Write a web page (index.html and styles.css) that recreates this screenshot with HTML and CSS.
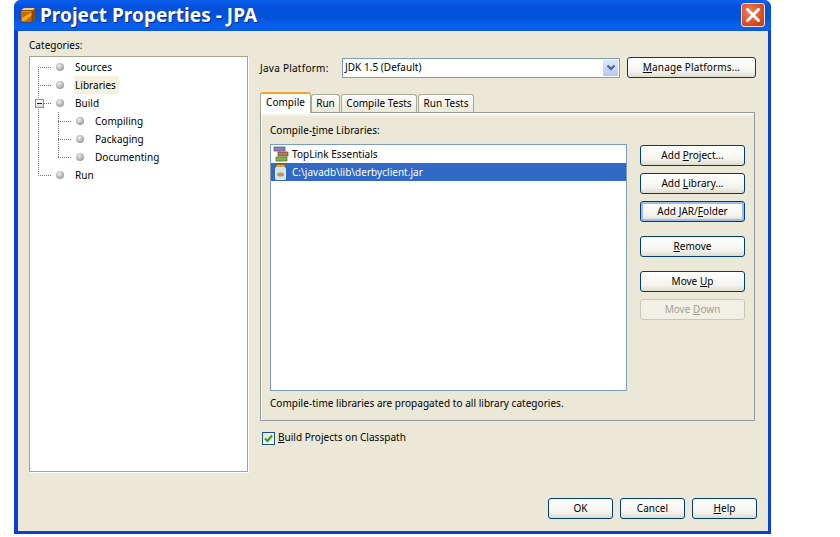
FILE: index.html
```html
<!DOCTYPE html>
<html lang="en">
<head>
<meta charset="utf-8">
<title>Project Properties - JPA</title>
<link rel="stylesheet" href="styles.css">
</head>
<body>
<div class="window">
  <header class="titlebar">
    <svg class="app-icon" width="16" height="16" viewBox="0 0 16 16">
      <path d="M1 3.500 4 1h11v11l-3 3H1z" fill="#e98a10"/>
      <path d="M1 3.500 4 1h11l-3 3H1z" fill="#f6c878"/>
      <path d="M12 4l3-3v11l-3 3z" fill="#8a4a08"/>
      <path d="M2 5h10v9H2z" fill="#c96a05"/>
      <path d="M2 11 12 5v3L5 14H2z" fill="#f3a720"/>
      <path d="M1 3.500h11V15H1z" fill="none" stroke="#6b3a0a" stroke-width=".8"/>
    </svg>
    <h1 class="title">Project Properties - JPA</h1>
    <button class="close" aria-label="Close">
      <svg width="14" height="14" viewBox="0 0 14 14"><path d="M1.500 1.500l11 11M12.500 1.500l-11 11" stroke="#fff" stroke-width="3" stroke-linecap="square"/></svg>
    </button>
  </header>
  <div class="client">
    <div class="main">
      <section class="left">
        <div class="cat-label">Categories:</div>
        <div class="tree">
          <svg class="connectors" width="60" height="130" viewBox="0 0 60 130">
            <path d="M8.500 10V119M8 10.500H22M8 28.500H22M14 46.500H22M8 118.500H22M28.500 55V101M28 64.500H42M28 82.500H42M28 100.500H42" fill="none" stroke="#777" stroke-dasharray="1 1"/>
          </svg>
          <span class="expander"></span>
          <div class="node"><span class="bullet"></span><span class="node-text">Sources</span></div>
          <div class="node"><span class="bullet"></span><span class="node-text node-sel">Libraries</span></div>
          <div class="node"><span class="bullet"></span><span class="node-text">Build</span></div>
          <div class="node sub"><span class="bullet"></span><span class="node-text">Compiling</span></div>
          <div class="node sub"><span class="bullet"></span><span class="node-text">Packaging</span></div>
          <div class="node sub"><span class="bullet"></span><span class="node-text">Documenting</span></div>
          <div class="node"><span class="bullet"></span><span class="node-text">Run</span></div>
        </div>
      </section>
      <section class="right">
        <div class="platform-row">
          <label class="platform-label"><span class="mn">J</span>ava Platform:</label>
          <div class="combo"><span class="combo-text">JDK 1.5 (Default)</span>
            <span class="combo-arrow"><svg width="10" height="8" viewBox="0 0 10 8"><path d="M1.500 1.500 5 5l3.500-3.500" fill="none" stroke="#4d6185" stroke-width="2"/></svg></span>
          </div>
          <button class="btn btn-manage"><span class="mn">M</span>anage Platforms...</button>
        </div>
        <div class="tabs">
          <div class="tab tab-active">Compile</div>
          <div class="tab tab-run">Run</div>
          <div class="tab tab-ct">Compile Tests</div>
          <div class="tab tab-rt">Run Tests</div>
        </div>
        <div class="panel">
          <div class="panel-label">Compile-<span class="mn">t</span>ime Libraries:</div>
          <div class="panel-body">
            <div class="list">
              <div class="row">
                <svg class="row-icon" width="16" height="16" viewBox="0 0 16 16">
                  <rect x="1" y="1" width="11" height="4" fill="#8a7fc0" stroke="#4d4780" stroke-width=".7"/>
                  <rect x="5" y="6" width="10" height="4" fill="#b87a4a" stroke="#6e4424" stroke-width=".7"/>
                  <rect x="3" y="11" width="11" height="4" fill="#7fb24f" stroke="#44702a" stroke-width=".7"/>
                </svg>
                <span>TopLink Essentials</span>
              </div>
              <div class="row row-sel">
                <svg class="row-icon" width="16" height="16" viewBox="0 0 16 16">
                  <rect x="3" y="0.500" width="9" height="3" fill="#e8a63a" stroke="#8a5a14" stroke-width=".7"/>
                  <rect x="2.500" y="3.500" width="10" height="12" rx="1" fill="#cfe4f6" stroke="#e8f2fb"/>
                  <ellipse cx="7.500" cy="10.500" rx="3.500" ry="2" fill="#d98d4a"/>
                </svg>
                <span>C:\javadb\lib\derbyclient.jar</span>
              </div>
            </div>
            <div class="side-buttons">
              <button class="btn">Add <span class="mn">P</span>roject...</button>
              <button class="btn">Add <span class="mn">L</span>ibrary...</button>
              <button class="btn btn-focus">Add JAR/<span class="mn">F</span>older</button>
              <button class="btn btn-gap"><span class="mn">R</span>emove</button>
              <button class="btn btn-gap">Move <span class="mn">U</span>p</button>
              <button class="btn btn-disabled">Move <span class="mn">D</span>own</button>
            </div>
          </div>
          <div class="note">Compile-time libraries are propagated to all library categories.</div>
        </div>
        <label class="check-row">
          <span class="checkbox"><svg width="9" height="9" viewBox="0 0 9 9"><path d="M1 4.500 3.500 7 8 1.500" fill="none" stroke="#21a121" stroke-width="2"/></svg></span>
          <span class="check-text"><span class="mn">B</span>uild Projects on Classpath</span>
        </label>
      </section>
    </div>
    <footer class="footer">
      <button class="btn btn-foot">OK</button>
      <button class="btn btn-foot">Cancel</button>
      <button class="btn btn-foot"><span class="mn">H</span>elp</button>
    </footer>
  </div>
</div>
</body>
</html>
```
FILE: styles.css
```css
* { box-sizing: border-box; }
html, body { margin: 0; padding: 0; background: #fff; }
body {
  width: 840px;
  height: 537px;
  overflow: hidden;
  font-family: "Noto Sans", sans-serif;
  font-size: 10px;
  letter-spacing: .03px;
  color: #000;
}
.window {
  width: 757px;
  height: 534px;
  margin-left: 14px;
  background: #0a3fd6;
  border-radius: 7px 7px 0 0;
  display: flex;
  flex-direction: column;
  padding: 0 3.500px 3px 3.500px;
  overflow: hidden;
}
.titlebar {
  height: 30.500px;
  margin: 0 -3.500px;
  padding: 0 6px 0 6px;
  display: flex;
  align-items: center;
  flex: none;
  background: linear-gradient(180deg, #0a5ae0 0, #0a5df0 4%, #0350dc 20%, #0252d8 55%, #0a62f0 85%, #0a5ae0 100%);
}
.app-icon { flex: none; }
.title {
  margin: 0 0 0 4px;
  flex: 1;
  font-family: "Noto Sans", sans-serif;
  font-weight: 700;
  font-size: 19px;
  line-height: 26px;
  color: #fff;
  text-shadow: 1px 1px 0 #0a2a90;
  white-space: nowrap;
}
.close {
  width: 24px;
  height: 24px;
  padding: 0;
  border: 1px solid #f0e8e4;
  border-radius: 3px;
  background: radial-gradient(circle at 35% 35%, #f0805a, #d9451c 70%, #c23a14);
  display: flex;
  align-items: center;
  justify-content: center;
}
.client {
  flex: 1;
  background: #ebe8d8;
  display: flex;
  flex-direction: column;
  min-height: 0;
}
.main {
  flex: 1;
  display: flex;
  min-height: 0;
  padding-left: 11.500px;
}
.left { width: 219px; flex: none; }
.cat-label { height: 25.500px; padding-top: 8px; line-height: 13px; }
.tree {
  position: relative;
  width: 219px;
  height: 416px;
  background: #fff;
  border: 1px solid #a5a294;
  box-shadow: 1px 1px 0 #fff;
  padding-top: 1px;
}
.connectors { position: absolute; left: 0; top: 0; }
.expander {
  position: absolute;
  left: 5px;
  top: 42px;
  width: 9px;
  height: 9px;
  background: linear-gradient(#fff, #d8d8e0);
  border: 1px solid #7a96c0;
}
.expander::after {
  content: "";
  position: absolute;
  left: 1px;
  top: 3px;
  width: 5px;
  height: 1px;
  background: #222;
}
.node {
  height: 18px;
  display: flex;
  align-items: center;
  padding-left: 26px;
}
.node.sub { padding-left: 46px; }
.bullet {
  width: 8px;
  height: 8px;
  border-radius: 50%;
  flex: none;
  background: radial-gradient(circle at 40% 35%, #eee, #a0a0a0 70%, #808080);
  margin-right: 10px;
}
.node-text { padding: 0 3px 0 1px; height: 18px; line-height: 18px; }
.node-sel { background: #f5f1dd; }
.right { width: 496px; margin-left: 12px; flex: none; }
.platform-row {
  display: flex;
  align-items: center;
  height: 21px;
  margin-top: 26.500px;
}
.platform-label { width: 82px; flex: none; line-height: 18px; letter-spacing: .25px; }
.combo {
  width: 278px;
  height: 20px;
  flex: none;
  background: #fff;
  border: 1px solid #7f9db9;
  display: flex;
  align-items: center;
  justify-content: space-between;
  padding-left: 2px;
}
.combo-text { line-height: 16px; margin-bottom: 2px; }
.combo-arrow {
  width: 15px;
  height: 16px;
  margin-right: 1px;
  background: linear-gradient(#dfe9fd, #b3c8f5);
  border-radius: 1px;
  display: flex;
  align-items: center;
  justify-content: center;
}
.btn {
  font: inherit;
  letter-spacing: inherit;
  color: #000;
  height: 21px;
  padding: 0 0 2px;
  border: 1px solid #003c74;
  border-radius: 3px;
  background: linear-gradient(#fff, #f4f3ee 70%, #dedccb);
  text-align: center;
}
.btn-manage { width: 129px; margin-left: 7px; letter-spacing: .15px; }
.mn { text-decoration: underline; }
.tabs {
  display: flex;
  align-items: flex-end;
  height: 21px;
  margin-top: 13px;
}
.tab {
  height: 18px;
  line-height: 16px;
  text-align: center;
  border: 1px solid #a9a99a;
  border-bottom: 0;
  border-radius: 3px 3px 0 0;
  background: linear-gradient(#fff, #ece9d8);
  margin-right: 1px;
  white-space: nowrap;
}
.tab-active {
  height: 21px;
  width: 51px;
  line-height: 17px;
  background: #fff;
  border-top: 2px solid #f3a62b;
  margin-bottom: -1px;
  position: relative;
  z-index: 1;
  margin-right: 0;
}
.tab-run { width: 29px; }
.tab-ct { width: 76px; }
.tab-rt { width: 56px; }
.panel {
  width: 495px;
  height: 308.500px;
  border: 1px solid #919b9c;
  background: #ebe8d8;
  box-shadow: inset 1px 1px 0 #fff, inset 0 3px 0 #f6f4ea;
  padding: 11px 9px 0 9px;
}
.panel-label { height: 20px; line-height: 13px; }
.panel-body { display: flex; }
.list {
  width: 357px;
  height: 247px;
  background: #fff;
  border: 1px solid #7f9db9;
}
.row {
  height: 18px;
  display: flex;
  align-items: center;
  padding-left: 2px;
  gap: 3px;
}
.row-sel { background: #316ac5; color: #fff; }
.row-icon { flex: none; }
.side-buttons {
  width: 105px;
  margin-left: 13px;
  display: flex;
  flex-direction: column;
  gap: 7px;
  margin-top: 1px;
}
.btn-gap { margin-top: 7px; }
.btn-focus { box-shadow: inset 0 0 0 2px #9dbcf0; }
.btn-disabled {
  color: #a1a192;
  border-color: #c9c7ba;
  background: #f2f0e6;
}
.note { margin-top: 6px; line-height: 13px; }
.check-row {
  display: flex;
  align-items: center;
  gap: 3px;
  margin-top: 11px;
  padding-left: 2px;
}
.check-text { line-height: 11px; margin-bottom: 2px; }
.checkbox {
  width: 13px;
  height: 13px;
  border: 1px solid #1c5180;
  background: linear-gradient(135deg, #e4e2d6, #fff);
  display: flex;
  align-items: center;
  justify-content: center;
  flex: none;
}
.footer {
  flex: none;
  display: flex;
  justify-content: flex-end;
  gap: 7px;
  padding: 0 10.500px 12px 0;
}
.btn-foot { width: 65px; }
```
